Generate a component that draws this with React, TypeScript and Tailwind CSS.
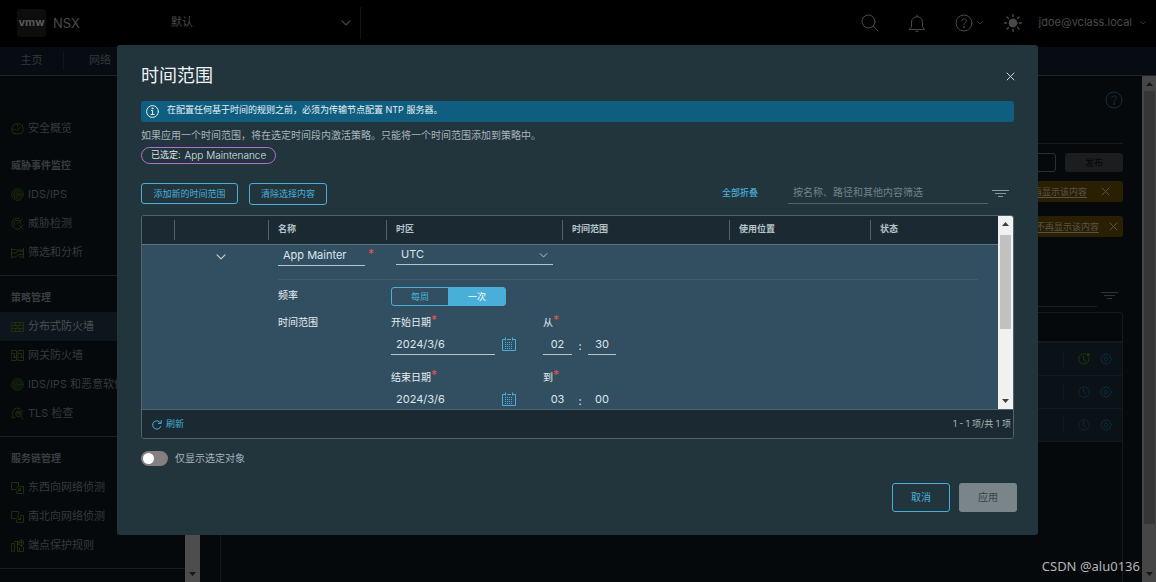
import { useState, type ReactNode } from "react";

type IconProps = { className?: string; children: ReactNode; box?: string };

function Icon({ className = "size-4", children, box = "0 0 16 16" }: IconProps) {
  return (
    <svg
      viewBox={box}
      className={"shrink-0 " + className}
      fill="none"
      stroke="currentColor"
      strokeWidth="1"
      strokeLinecap="round"
      strokeLinejoin="round"
      aria-hidden="true"
    >
      {children}
    </svg>
  );
}

const Chevron = ({ className = "h-[6px] w-[10px]" }: { className?: string }) => (
  <Icon box="0 0 10 6" className={className}>
    <path d="M1 0.8 L5 4.8 L9 0.8" strokeWidth="1.2" />
  </Icon>
);

const Cross = ({ className = "size-[9px]" }: { className?: string }) => (
  <Icon box="0 0 9 9" className={className}>
    <path d="M1 1 L8 8 M8 1 L1 8" />
  </Icon>
);

const HelpCircle = ({ className = "size-[18px]" }: { className?: string }) => (
  <Icon box="0 0 18 18" className={className}>
    <circle cx="9" cy="9" r="8" />
    <path d="M6.6 6.8 C6.8 4.2 11.4 4.2 11.4 7 C11.4 8.8 9 8.8 9 10.8" />
    <circle cx="9" cy="13" r="0.5" fill="currentColor" />
  </Icon>
);

const FilterLines = ({ className = "h-[9px] w-[17px]" }: { className?: string }) => (
  <Icon box="0 0 17 9" className={className}>
    <path d="M0.5 1.5 H16.5 M3.5 4.5 H13.5 M6.5 7.5 H10.5" strokeLinecap="square" />
  </Icon>
);

const ScrollArrow = ({ up = false }: { up?: boolean }) => (
  <svg viewBox="0 0 7 4" className="h-1 w-[7px]" fill="currentColor" aria-hidden="true">
    <path d={up ? "M0 4 L3.5 0 L7 4 Z" : "M0 0 L3.5 4 L7 0 Z"} />
  </svg>
);

const GaugeIcon = () => (
  <Icon className="size-[13px]" box="0 0 13 13">
    <path d="M2.4 11.5 A5.8 5.8 0 1 1 10.6 11.5 Z" />
    <path d="M6 8.5 L9.5 5 M3 7.5 H4 M6.5 3 V4" />
  </Icon>
);

const RadarIcon = () => (
  <Icon className="size-[13px]" box="0 0 13 13">
    <circle cx="6.5" cy="6.5" r="5.8" />
    <circle cx="6.5" cy="6.5" r="3.8" />
    <circle cx="6.5" cy="6.5" r="1.8" />
    <circle cx="6.5" cy="6.5" r="0.3" />
  </Icon>
);

const DetectIcon = () => (
  <Icon className="size-[13px]" box="0 0 13 13">
    <path d="M11.6 8 A5.5 5.5 0 1 1 8 1.4" />
    <path d="M4 9 A3.4 3.4 0 1 1 9.8 7 M6.5 6.5 L11.5 2 M8.5 8.5 L12 12" />
  </Icon>
);

const AnalyzeIcon = () => (
  <Icon className="size-[13px]" box="0 0 13 13">
    <path d="M0.5 2 V12 M12.5 2 V12 M0.5 3.5 H4.5 L12.5 6 M0.5 7 H5 L8 4 H12.5 M0.5 11 H4.5 L8 8.5 H12.5 M8.5 11 H12.5" />
  </Icon>
);

const WallIcon = () => (
  <Icon className="size-[13px]" box="0 0 13 13">
    <path d="M0.5 2.5 H12.5 V11.5 H0.5 Z M0.5 5.5 H12.5 M0.5 8.5 H12.5 M4.5 2.5 V5.5 M8.5 2.5 V5.5 M6.5 5.5 V8.5 M4.5 8.5 V11.5 M8.5 8.5 V11.5" />
  </Icon>
);

const GatewayIcon = () => (
  <Icon className="size-[13px]" box="0 0 13 13">
    <path d="M0.5 1.5 H5.5 V11.5 H0.5 Z M7.5 1.5 H12.5 V11.5 H7.5 Z M0.5 4.5 H3.5 V8.5 M5.5 8.5 H2.5 M7.5 4.5 H10.5 V8.5 M12.5 8.5 H9.5" />
  </Icon>
);

const TlsIcon = () => (
  <Icon className="size-[13px]" box="0 0 13 13">
    <path d="M9 1.8 A5 5 0 0 0 2 8.5 L1 11 L4 10.5" />
    <circle cx="7.5" cy="6.8" r="2.8" />
    <path d="M9.6 8.8 L12 12 M6.5 6.5 V5.6 A1 1 0 0 1 8.5 5.6 V6.5 M6 6.8 H9 M10 3 L12 4.5" />
  </Icon>
);

const InspectIcon = () => (
  <Icon className="size-[13px]" box="0 0 13 13">
    <path d="M5.5 8.5 H0.5 V1.5 H7.5 V5.5 M9.5 5.5 H12.5 V12.5 H5.5 V10.5 M6 6 L9.5 9.5 M9.5 7 V9.5 H7" />
  </Icon>
);

const EndpointIcon = () => (
  <Icon className="size-[13px]" box="0 0 13 13">
    <path d="M0.5 12.5 V4.5 H3.5 V12.5 Z M3.5 2.5 H6.5 V12.5 H12.5 V8 M6.5 5.5 H8 M8 2 L10.5 1 L12.5 2 V5 L10.5 7.5 L8 5 Z M8.5 9 V12.5 M10.5 1 V7.5 M8 3.5 H12.5" />
  </Icon>
);

const GearIcon = () => (
  <Icon className="size-3" box="0 0 12 12">
    <circle cx="6" cy="6" r="1.8" />
    <path d="M5 0.8 H7 L7.4 2.2 L9 1.5 L10.4 3 L9.8 4.6 L11.2 5 V7 L9.8 7.4 L10.4 9 L9 10.4 L7.4 9.8 L7 11.2 H5 L4.6 9.8 L3 10.4 L1.6 9 L2.2 7.4 L0.8 7 V5 L2.2 4.6 L1.6 3 L3 1.6 L4.6 2.2 Z" />
  </Icon>
);

const ClockIcon = ({ dot = false }: { dot?: boolean }) => (
  <Icon className="size-3" box="0 0 12 12">
    <path d={dot ? "M7.5 0.9 A5.2 5.2 0 1 0 11 5" : "M6 0.8 A5.2 5.2 0 1 0 6.01 0.8"} />
    <path d="M5.5 3 V6.2 L8 8.4" />
    {dot && <circle cx="10.2" cy="1.8" r="1.3" fill="currentColor" />}
  </Icon>
);

const CalendarIcon = () => (
  <Icon className="size-[14px]" box="0 0 14 14">
    <path d="M3 2.5 H0.5 V13.5 H13.5 V2.5 H11 M5 2.5 H9 M3.5 0.5 V3.5 M10.5 0.5 V3.5" strokeLinecap="butt" />
    <path d="M3 5.5 H11 M3 7.5 H11 M3 9.5 H11 M3 11.5 H11" strokeDasharray="1 1" strokeLinecap="butt" />
  </Icon>
);

type NavItem = { label: string; icon: ReactNode; active?: boolean };

const sections: { title: string; items: NavItem[] }[] = [
  {
    title: "威胁事件监控",
    items: [
      { label: "IDS/IPS", icon: <RadarIcon /> },
      { label: "威胁检测", icon: <DetectIcon /> },
      { label: "筛选和分析", icon: <AnalyzeIcon /> },
    ],
  },
  {
    title: "策略管理",
    items: [
      { label: "分布式防火墙", icon: <WallIcon />, active: true },
      { label: "网关防火墙", icon: <GatewayIcon /> },
      { label: "IDS/IPS 和恶意软件", icon: <RadarIcon /> },
      { label: "TLS 检查", icon: <TlsIcon /> },
    ],
  },
  {
    title: "服务链管理",
    items: [
      { label: "东西向网络侦测", icon: <InspectIcon /> },
      { label: "南北向网络侦测", icon: <InspectIcon /> },
      { label: "端点保护规则", icon: <EndpointIcon /> },
    ],
  },
];

function NavLink({ label, icon, active }: NavItem) {
  return (
    <a
      href="#"
      className={
        "flex h-[29px] items-center gap-1 whitespace-nowrap pl-[11px] text-[11px] " +
        (active ? "bg-[#0d161c] text-[#4c5053]" : "text-[#35393c]")
      }
    >
      <span className="text-[#1d3009]">{icon}</span>
      {label}
    </a>
  );
}

function Sidebar() {
  return (
    <div className="flex w-[200px] shrink-0">
      <nav className="min-w-0 flex-1 overflow-hidden pt-[38px]">
        <NavLink label="安全概览" icon={<GaugeIcon />} />
        {sections.map((s, i) => (
          <section
            key={s.title}
            className={"pb-2 " + (i === 0 ? "pt-2" : "border-t border-[#1b1f22] pt-[7px]")}
          >
            <h2 className="flex h-[29px] items-center pl-[11px] text-[10px] font-bold text-[#3a3d40]">
              {s.title}
            </h2>
            {s.items.map((it) => (
              <NavLink key={it.label} {...it} />
            ))}
          </section>
        ))}
        <div className="border-t border-[#1b1f22]" />
      </nav>
      <div className="flex w-[15px] flex-col items-center justify-end bg-[#4d4d4d] pb-[6px] text-[#161616]">
        <ScrollArrow />
      </div>
    </div>
  );
}

function TopBar() {
  return (
    <header className="flex h-[47px] shrink-0 items-center bg-black pb-[2px] text-[#4a4a4a]">
      <div className="ml-[17px] flex h-7 w-[29px] items-center justify-center rounded-[3px] bg-[#0d0d0d] text-[11px] font-bold text-[#5a5a5a]">
        vmw
      </div>
      <span className="ml-[7px] w-[118px] text-[13px] leading-5">NSX</span>
      <button type="button" className="flex h-8 w-[190px] items-center justify-between border-r border-[#151515] pr-[9px] text-[11px]">
        默认
        <Chevron />
      </button>
      <div className="ml-auto flex items-center pr-[10px]">
        <button type="button" aria-label="搜索">
          <Icon className="size-[18px]" box="0 0 18 18">
            <circle cx="7.5" cy="7.5" r="6.5" />
            <path d="M12.2 12.2 L17 17" />
          </Icon>
        </button>
        <button type="button" aria-label="通知" className="ml-[29px]">
          <Icon className="size-[18px]" box="0 0 18 18">
            <path d="M1.5 15.5 H16.5 L14.5 12.5 V8 C14.5 1 3.5 1 3.5 8 V12.5 Z M9 1 V2.5 M7.8 17.3 H10.2" />
          </Icon>
        </button>
        <button type="button" aria-label="帮助" className="ml-[29px] flex items-center gap-1">
          <HelpCircle />
          <Chevron className="h-1 w-[6px]" />
        </button>
        <button type="button" aria-label="主题" className="ml-5">
          <Icon className="size-5" box="0 0 20 20">
            <circle cx="10" cy="10" r="4" fill="currentColor" />
            <path d="M10 1.5 V3.5 M10 16.5 V18.5 M1.5 10 H3.5 M16.5 10 H18.5 M4 4 L5.4 5.4 M14.6 14.6 L16 16 M16 4 L14.6 5.4 M5.4 14.6 L4 16" strokeWidth="1.4" />
          </Icon>
        </button>
        <button type="button" className="ml-4 flex items-center gap-2 text-[11px]">
          jdoe@vclass.local
          <Chevron className="h-1 w-[6px]" />
        </button>
      </div>
    </header>
  );
}

function WarningBar({ text, className }: { text: string; className: string }) {
  return (
    <div className={"flex h-[21px] items-center justify-end rounded-[3px] bg-[#2b1f02] text-[9px] text-[#55544c] " + className}>
      <a href="#" className="underline underline-offset-2">
        {text}
      </a>
      <button type="button" aria-label="关闭">
        <Cross />
      </button>
    </div>
  );
}

function PolicyPage() {
  return (
    <main className="flex min-w-0 flex-1 flex-col pl-5 pr-[19px]">
      <div className="flex h-[68px] items-start justify-end border-b border-[#161b1e] pt-[15px] text-[#12303a]">
        <button type="button" aria-label="页面帮助">
          <HelpCircle />
        </button>
      </div>
      <div className="mt-[9px] flex justify-end gap-[9px] text-[9px]">
        <button type="button" className="h-[19px] w-[58px] rounded-[3px] border border-[#25303a] text-[#25303a]">
          恢复
        </button>
        <button type="button" className="h-[19px] w-[58px] rounded-[3px] bg-[#1b1d1f] text-[#050505]">
          发布
        </button>
      </div>
      <WarningBar text="不再显示该内容" className="mt-[9px] gap-[14px] pr-[13px]" />
      <WarningBar text="不再显示该内容" className="mt-[14px] gap-[10px] pr-[5px]" />
      <div className="mt-[50px] flex h-5 items-start justify-end gap-1 pr-[5px] text-[#333]">
        <div className="mt-[19px] w-[200px] border-t border-[#1b2023]" />
        <FilterLines className="mt-1 h-[9px] w-[17px]" />
      </div>
      <div className="mt-[5px] flex-1 rounded-t-[3px] border border-b-0 border-[#15191c]">
        <div className="h-[30px] border-b-2 border-[#13181b]" />
        {[0, 1, 2].map((i) => (
          <div
            key={i}
            className="flex h-[33px] items-center justify-end gap-[10px] border-b border-[#12181c] bg-[#0a1218] pr-[10px] text-[#0e2a38]"
          >
            <span className="mr-1 h-4 border-l border-[#131a1f]" />
            <span className={i === 0 ? "text-[#1c3a0a]" : i === 1 ? "text-[#0e2a38]" : "text-[#1a2326]"}>
              <ClockIcon dot={i === 0} />
            </span>
            <GearIcon />
          </div>
        ))}
      </div>
    </main>
  );
}

const Required = () => <span className="h-4 text-[12px] leading-none text-[#e4524d]">*</span>;

const fieldLine = "border-b border-[#b5c3cb] bg-transparent text-[11px] text-[#dde5e9] outline-none";

function DateRow({ id, dateLabel, timeLabel, hour, minute }: Record<"id" | "dateLabel" | "timeLabel" | "hour" | "minute", string>) {
  return (
    <>
      <div className="h-[55px]">
        <label htmlFor={id + "-date"} className="flex h-[21px] items-center pb-px">
          {dateLabel}
          <Required />
        </label>
        <div className="flex gap-[7px]">
          <input id={id + "-date"} defaultValue="2024/3/6" className={"h-[22px] w-[104px] px-[5px] " + fieldLine} />
          <button type="button" aria-label="选择日期" className="text-[#49afd9]">
            <CalendarIcon />
          </button>
        </div>
      </div>
      <div className="h-[55px]">
        <label htmlFor={id + "-hour"} className="flex h-[21px] items-center pb-px">
          {timeLabel}
          <Required />
        </label>
        <div className="flex items-center">
          <input id={id + "-hour"} defaultValue={hour} className={"h-[22px] w-[29px] text-center " + fieldLine} />
          <span className="w-4 pt-[3px] text-center text-[11px]">:</span>
          <input aria-label="分钟" defaultValue={minute} className={"h-[22px] w-7 text-center " + fieldLine} />
        </div>
      </div>
    </>
  );
}

const headers = ["", "", "名称", "时区", "时间范围", "使用位置", "状态"];

function RangeTable() {
  const [freq, setFreq] = useState("once");
  return (
    <div className="mt-[10px] overflow-hidden rounded-[3px] border border-[#52636c]">
      <div className="flex h-[193px]">
        <div className="min-w-0 flex-1 overflow-hidden bg-[#324f62]">
          <table className="w-full table-fixed border-collapse">
            <colgroup>
              <col className="w-8" />
              <col className="w-[94px]" />
              <col className="w-[118px]" />
              <col className="w-[176px]" />
              <col className="w-[167px]" />
              <col className="w-[141px]" />
              <col />
            </colgroup>
            <thead>
              <tr className="border-b border-[#5d7480] bg-[#1b2a32]">
                {headers.map((h, i) => (
                  <th key={i} scope="col" className="h-7 p-0 text-left text-[9px] font-bold text-[#b9c5cb]">
                    <span className={"flex h-5 items-center pb-[3px] pl-[9px] " + (i ? "border-l border-[#52636c]" : "")}>
                      {h}
                    </span>
                  </th>
                ))}
              </tr>
            </thead>
            <tbody>
              <tr className="h-[35px] align-top">
                <td className="p-0" />
                <td className="p-0">
                  <button type="button" aria-label="折叠" className="ml-[42px] mt-[9px] block text-[#c3ced4]">
                    <Chevron />
                  </button>
                </td>
                <td className="p-0 pl-[10px]">
                  <div className="flex items-start gap-[3px]">
                    <input aria-label="名称" defaultValue="App Mainter" className={"h-[21px] w-[87px] px-[5px] " + fieldLine} />
                    <span className="flex pt-[3px]">
                      <Required />
                    </span>
                  </div>
                </td>
                <td className="p-0 pl-[10px]">
                  <div className="relative w-[157px] text-[#b5c3cb]">
                    <select aria-label="时区" className={"block h-5 w-full appearance-none px-[5px] " + fieldLine}>
                      <option>UTC</option>
                    </select>
                    <span className="pointer-events-none absolute inset-y-0 right-[5px] flex items-center pt-px">
                      <Chevron className="h-[5px] w-[9px]" />
                    </span>
                  </div>
                </td>
                <td colSpan={3} />
              </tr>
              <tr>
                <td colSpan={2} />
                <td colSpan={5} className="p-0 pl-[10px] pr-5">
                  <div className="grid grid-cols-[113px_152px_1fr] border-t border-[#405d6f] pt-[7px] text-[10px] leading-4 text-[#e6edf0]">
                    <div>频率</div>
                    <div className="col-span-2 mb-[6px] flex h-[19px] text-[9px]">
                      {[
                        ["weekly", "每周"],
                        ["once", "一次"],
                      ].map(([value, label]) => (
                        <label
                          key={value}
                          className={
                            "relative flex w-[58px] items-center justify-center border border-[#49afd9] first:rounded-l-[3px] last:-ml-px last:rounded-r-[3px] " +
                            (freq === value ? "bg-[#49afd9] text-white" : "text-[#49afd9]")
                          }
                        >
                          <input
                            type="radio"
                            name="frequency"
                            className="sr-only"
                            checked={freq === value}
                            onChange={() => setFreq(value)}
                          />
                          {label}
                        </label>
                      ))}
                    </div>
                    <div className="row-span-2 leading-5">时间范围</div>
                    <DateRow id="start" dateLabel="开始日期" timeLabel="从" hour="02" minute="30" />
                    <DateRow id="end" dateLabel="结束日期" timeLabel="到" hour="03" minute="00" />
                  </div>
                </td>
              </tr>
            </tbody>
          </table>
        </div>
        <div className="flex w-[15px] flex-col items-center bg-[#f1f1f1] text-[#404040]">
          <div className="flex h-[19px] items-center pb-[3px]">
            <ScrollArrow up />
          </div>
          <div className="h-[94px] w-[11px] bg-[#c1c1c1]" />
          <div className="mt-auto pb-[6px]">
            <ScrollArrow />
          </div>
        </div>
      </div>
      <div className="flex h-[29px] items-center justify-between border-t border-[#52636c] bg-[#1b2a32] pl-[10px] pr-[2px] text-[9px]">
        <button type="button" className="flex items-center gap-1 text-[#49afd9]">
          <Icon className="mt-[2px] size-[10px]" box="0 0 10 10">
            <path d="M8.8 6.5 A4.2 4.2 0 1 1 8.6 3 M9.2 0.6 V3.4 H6.4" />
          </Icon>
          刷新
        </button>
        <span className="text-[#a9b6bc]">1 - 1 项/共 1 项</span>
      </div>
    </div>
  );
}

function TimeRangeDialog() {
  const outline = "rounded-[3px] border border-[#49afd9] text-[#49afd9]";
  return (
    <div
      role="dialog"
      aria-labelledby="dialog-title"
      className="rounded-[3px] bg-[#22343c] px-6 pb-[23px] pt-[17px] text-[#a9b6bc]"
    >
      <div className="flex h-[26px] items-center justify-between">
        <h1 id="dialog-title" className="text-[18px] text-[#eef2f4]">
          时间范围
        </h1>
        <button type="button" aria-label="关闭" className="mr-[-1px] pt-[2px] text-[#d0d8dc]">
          <Cross />
        </button>
      </div>
      <div className="mt-[13px] flex h-[21px] items-center gap-2 rounded-[3px] bg-[#0f5e80] pl-[5px] text-[9px] text-[#e9f1f5]">
        <Icon className="size-[13px]" box="0 0 13 13">
          <circle cx="6.5" cy="6.5" r="5.9" />
          <path d="M5.4 5.5 H6.6 V9.5 M5 9.5 H8.2" />
          <circle cx="6.4" cy="3.4" r="0.5" fill="currentColor" />
        </Icon>
        <span className="pb-[3px]">在配置任何基于时间的规则之前，必须为传输节点配置 NTP 服务器。</span>
      </div>
      <p className="mt-1 text-[10px] leading-[18px]">
        如果应用一个时间范围，将在选定时间段内激活策略。只能将一个时间范围添加到策略中。
      </p>
      <div className="mt-[3px] flex">
        <span className="flex h-[17px] items-center gap-1 rounded-full border border-[#b46fd0] px-[9px] pb-px text-[9px] text-[#dfe6e9]">
          <span>已选定:</span>
          <span className="text-[10px] font-light">App Maintenance</span>
        </span>
      </div>
      <div className="mt-[19px] flex h-[22px] items-start">
        <button type="button" className={"h-[21px] w-[97px] text-[9px] " + outline}>
          添加新的时间范围
        </button>
        <button type="button" className={"ml-[11px] h-[22px] w-[78px] text-[9px] " + outline}>
          清除选择内容
        </button>
        <button type="button" className="ml-auto h-5 text-[9px] font-medium text-[#49afd9]">
          全部折叠
        </button>
        <input
          type="search"
          aria-label="筛选"
          placeholder="按名称、路径和其他内容筛选"
          className="ml-[30px] h-[21px] w-[200px] border-b border-[#52636c] bg-transparent px-[5px] pb-[3px] text-[10px] outline-none placeholder:text-[#71838c]"
        />
        <button type="button" aria-label="筛选选项" className="ml-1 mr-[5px] h-5 text-[#8a999f]">
          <FilterLines />
        </button>
      </div>
      <RangeTable />
      <label className="mt-[11px] flex h-4 items-center gap-[7px] text-[10px]">
        <input
          type="checkbox"
          className="flex h-[15px] w-[27px] appearance-none items-center rounded-full bg-[#857f80] pl-[2px] before:size-[11px] before:rounded-full before:bg-white"
        />
        仅显示选定对象
      </label>
      <div className="mr-[-3px] mt-[17px] flex justify-end gap-[9px] text-[10px]">
        <button type="button" className={"h-[29px] w-[58px] " + outline}>
          取消
        </button>
        <button type="button" disabled className="h-[29px] w-[58px] rounded-[3px] bg-[#798589] text-[#33434a]">
          应用
        </button>
      </div>
    </div>
  );
}

export default function App() {
  return (
    <div className="relative flex h-screen flex-col overflow-hidden bg-[#05090c] font-['Inter','Noto_Sans_CJK_SC',sans-serif]">
      <TopBar />
      <nav className="flex h-[29px] shrink-0 items-center border-b border-[#202529] bg-[#060c11] text-[11px] text-[#33383b]">
        <a href="#" className="w-16 border-r border-[#12171a] pb-[2px] text-center">
          主页
        </a>
        <a href="#" className="px-[25px] pb-[2px]">
          网络
        </a>
      </nav>
      <div className="flex min-h-0 flex-1">
        <Sidebar />
        <PolicyPage />
        <div className="flex w-[14px] shrink-0 flex-col items-center bg-[#464646] pb-[6px] text-[#161616]">
          <div className="flex h-[15px] items-center">
            <ScrollArrow up />
          </div>
          <div className="mb-[48px] w-[11px] flex-1 bg-[#363636]" />
          <ScrollArrow />
        </div>
      </div>
      <div className="absolute inset-x-0 top-[45px] pl-[117px] pr-[118px]">
        <TimeRangeDialog />
      </div>
      <div className="absolute bottom-[6px] right-4 font-['Noto_Sans',sans-serif] text-[13px] leading-5 text-[#b4b6b7]">
        CSDN @alu0136
      </div>
    </div>
  );
}
